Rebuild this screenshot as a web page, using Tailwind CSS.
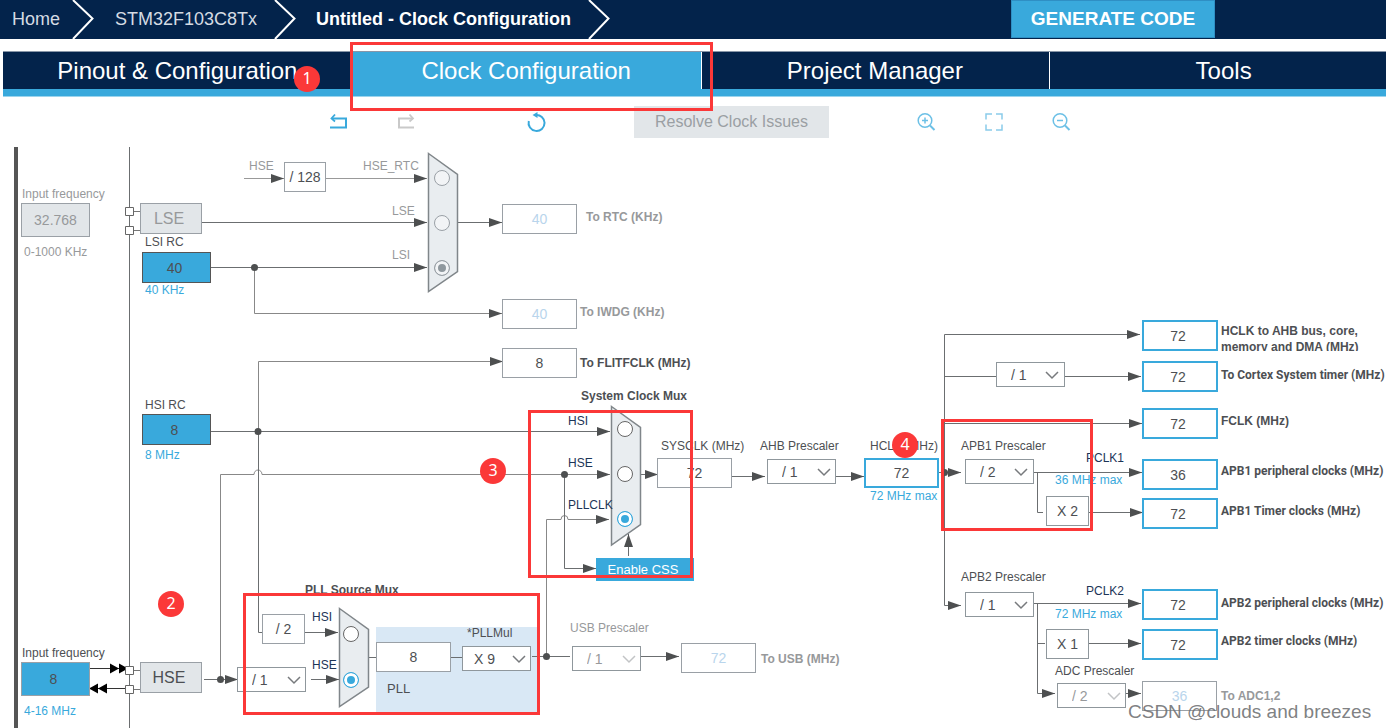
<!DOCTYPE html>
<html lang="en">
<head>
<meta charset="utf-8">
<meta name="viewport" content="width=device-width, initial-scale=1">
<title>Untitled - Clock Configuration</title>
<script src="https://cdn.jsdelivr.net/npm/@tailwindcss/browser@4"></script>
</head>
<body class="relative flex h-screen flex-col overflow-hidden bg-white font-['Liberation_Sans',Arial,sans-serif] text-[#4d4f53]">

<header class="flex h-[39px] shrink-0 items-center bg-[#03234b] text-lg text-white">
  <nav aria-label="Breadcrumb" class="flex h-full items-center [&>a]:pb-0.5">
    <a href="#" class="w-[72px] pl-3 text-[#d5dbe3]">Home</a>
    <svg class="h-full w-[22px]" viewBox="0 0 22 39" fill="none" stroke="#fff" stroke-width="2"><path d="M1 0 20.500 18.500 1 39"/></svg>
    <a href="#" class="w-[180px] pl-[21px] text-[#d5dbe3]">STM32F103C8Tx</a>
    <svg class="h-full w-[22px]" viewBox="0 0 22 39" fill="none" stroke="#fff" stroke-width="2"><path d="M1 0 20.500 18.500 1 39"/></svg>
    <a href="#" aria-current="page" class="w-[292px] pl-5 font-bold whitespace-nowrap">Untitled - Clock Configuration</a>
    <svg class="h-full w-[22px]" viewBox="0 0 22 39" fill="none" stroke="#fff" stroke-width="2"><path d="M1 0 20.500 18.500 1 39"/></svg>
  </nav>
  <button class="mr-[171px] mb-px ml-auto h-[38px] w-[204px] border border-[#2f8fc4] bg-[#39a9dc] text-[19px] font-bold">GENERATE CODE</button>
</header>

<nav aria-label="Sections" class="mt-3 -mr-3 ml-[3px] grid h-[46px] shrink-0 grid-cols-4 border-t border-b border-t-[#8896a8] border-b-[#9bd4ed] text-2xl text-white [&>a]:flex [&>a]:items-center [&>a]:justify-center [&>a]:border-b-[7px] [&>a]:border-[#39a9dc]">
  <a href="#" class="bg-[#03234b]">Pinout &amp; Configuration</a>
  <a href="#" aria-current="page" class="bg-[#39a9dc]">Clock Configuration</a>
  <a href="#" class="bg-[#03234b] shadow-[inset_1px_0_#fff]">Project Manager</a>
  <a href="#" class="bg-[#03234b] shadow-[inset_1px_0_#fff]">Tools</a>
</nav>

<div role="toolbar" aria-label="Clock tools" class="flex h-[43px] shrink-0 items-start pt-[9px] pl-[327px] [&>button]:flex [&>button]:h-8 [&>button]:items-center [&>button]:justify-center">
  <button aria-label="Undo" class="w-6"><svg class="size-6" viewBox="0 0 24 24" fill="none" stroke="#39a9dc" stroke-width="2"><path d="M5 8.500H19V17.500H3"/><path d="M8 4.500 4.500 8.500 8 11.500" stroke-width="1.800"/></svg></button>
  <button aria-label="Redo" class="ml-[43px] w-6" disabled><svg class="size-6" viewBox="0 0 24 24" fill="none" stroke="#c9c9c9" stroke-width="2"><path d="M19 8.500H5V17.500H20"/><path d="M15.500 4.500 19 8.500l-3.500 3" stroke-width="1.800"/></svg></button>
  <button aria-label="Reset" class="ml-[107px] w-6"><svg class="size-6" viewBox="0 0 24 24" fill="none" stroke="#39a9dc" stroke-width="2"><path d="M3.800 11A8 8 0 1 0 10.500 5"/><path d="M7.500 5 12.500 2v6z" fill="#39a9dc" stroke="none"/></svg></button>
  <button class="ml-[85px] w-[195px] bg-[#e2e6e9] text-base text-[#9a9fa3]" disabled>Resolve Clock Issues</button>
  <button aria-label="Zoom in" class="ml-[85px] w-6"><svg class="size-6" viewBox="0 0 24 24" fill="none" stroke="#6cc0e6" stroke-width="1.500"><circle cx="11" cy="10.500" r="6.800"/><path d="M8 10.500h6M11 7.500v6"/><path d="m16 15.500 4.500 4.500" stroke-width="2"/></svg></button>
  <button aria-label="Fit to window" class="ml-11 w-6"><svg class="size-6" viewBox="0 0 24 24" fill="none" stroke="#8accea" stroke-width="1.500"><path d="M4 9.500V4h6M14 4h6v5.500M20 14.500V20h-6M10 20H4v-5.500"/></svg></button>
  <button aria-label="Zoom out" class="ml-[43px] w-6"><svg class="size-6" viewBox="0 0 24 24" fill="none" stroke="#6cc0e6" stroke-width="1.500"><circle cx="11" cy="10.500" r="6.800"/><path d="M8 10.500h6"/><path d="m16 15.500 4.500 4.500" stroke-width="2"/></svg></button>
</div>

<!-- Clock tree: a free canvas of nodes joined by wires -->
<main class="relative grow overflow-hidden text-xs leading-4 whitespace-nowrap *:absolute [&>button]:border [&>button]:border-[#9aa0a6] [&>button]:bg-[#e2e6e9] [&>button]:text-base [&>input[type=radio]]:size-4 [&>input[type=radio]]:appearance-none [&>input[type=radio]]:rounded-full [&>input[type=radio]]:border [&>input[type=radio]]:bg-white [&>input[type=text]]:border [&>input[type=text]]:text-center [&>input[type=text]]:text-sm [&>select]:h-[25px] [&>select]:w-[69px] [&>select]:appearance-none [&>select]:border [&>select]:border-[#8f979c] [&>select]:bg-white [&>select]:pl-[14px] [&>select]:text-sm [&>select]:opacity-100">

  <div class="top-[487px] left-[376px] h-[85px] w-[164px] bg-[#d9e8f5]"></div>

  <svg class="top-0 left-0 h-[588px] w-[1386px]" viewBox="0 140 1386 588" fill="none" stroke="#6b6e70">
    <defs>
      <marker id="arrow" markerUnits="userSpaceOnUse" markerWidth="13" markerHeight="10" refX="13" refY="5" orient="auto"><path d="M0 0.500 13 5 0 9.500z" fill="#4d4f50" stroke="none"/></marker>
    </defs>
    <path d="M16 147V728" stroke="#555" stroke-width="4"/>
    <path d="M129.500 147V728"/>
    <g stroke="#777"><path d="M133 211.500h7M133 230.500h7M133 670.500h7M133 689.500h7"/></g>

    <!-- wires that end in an arrow -->
    <g marker-end="url(#arrow)">
      <path d="M244 178.500H284" stroke="#999"/>
      <path d="M326 178.500H427" stroke="#999"/>
      <path d="M202 222.500H427"/>
      <path d="M211 267.500H427"/>
      <path d="M458 222.500H502"/>
      <path d="M254.500 267V313.500H502" stroke="#888"/>
      <path d="M258.500 431V361.500H503" stroke="#888"/>
      <path d="M211 431.500H610"/>
      <path d="M220.500 679V474.500H254a4 4.500 0 0 1 8 0H610" stroke="#888"/>
      <path d="M546.500 656V519.500H561a3.500 4 0 0 1 7 0H609" stroke="#888"/>
      <path d="M564.500 474V568.500H596"/>
      <path d="M640 474.500H658"/>
      <path d="M732 476.500H765"/>
      <path d="M836 476.500H864"/>
      <path d="M939 472.500H961"/>
      <path d="M944.500 472V334.500H1140"/>
      <path d="M1065 376.500H1141"/>
      <path d="M944 423.500H1142"/>
      <path d="M1034 472.500H1142"/>
      <path d="M1089 512.500H1143"/>
      <path d="M944.500 472V605.500H961"/>
      <path d="M1034 603.500H1141"/>
      <path d="M1089 643.500H1141"/>
      <path d="M1037.500 603V693.500H1055"/>
      <path d="M1126 693.500H1141"/>
      <path d="M204 679.500H238"/>
      <path d="M311 679.500H339"/>
      <path d="M305 632.500H338"/>
      <path d="M641 656.500H679"/>
    </g>
    <path d="M258.500 431V632.500H263M944 376.500H996M1037.500 472V512.500H1043M1037 643.500h8M368 657.500h8M451 657.500h11M532 656.500h38"/>

    <g stroke="none" fill="#4d4f50">
      <circle cx="254.500" cy="267.500" r="3.500"/><circle cx="258" cy="431.500" r="3.500"/><circle cx="220.500" cy="679.500" r="3.500"/>
      <circle cx="564.500" cy="474.500" r="3.500"/><circle cx="546.500" cy="656.500" r="3.500"/><circle cx="944.500" cy="472.500" r="3.500"/>
    </g>

    <!-- external crystal pins -->
    <g stroke="#333"><path d="M90 668.500H125M97 688.500H125"/></g>
    <path d="M110 663.500l9 5-9 5zM119 663.500l9 5-9 5zM98 683.500l-9 5 9 5zM107 683.500l-9 5 9 5z" fill="#000" stroke="none"/>
    <g fill="#fff" stroke="#666"><path d="M125.500 207.500h8v8h-8zM125.500 226.500h8v8h-8zM125.500 666.500h8v8h-8zM125.500 685.500h8v8h-8z"/></g>

    <g fill="#e9edf0" stroke="#80868a">
      <path d="M428.500 153.500 457.500 174.500V271.500L428.500 291.500z" stroke-width="1.500"/>
      <path d="M611.500 406.500 640.500 427.500V524.500L611.500 545z" stroke-width="1.500"/>
      <path d="M339.500 608.500 368.500 629.500V687L339.500 706.500z" stroke-width="1.500"/>
    </g>
    <path d="M628.500 556V534" marker-end="url(#arrow)"/>
  </svg>

  <!-- LSE / LSI / HSI / HSE sources -->
  <label for="lse-in" class="top-[46px] left-[22px] text-[#97999b]">Input frequency</label>
  <input id="lse-in" type="text" value="32.768" disabled class="top-[63px] left-[21px] h-[34px] w-[69px] border-[#9aa0a6] bg-[#e2e6e9] text-[#97999b]">
  <span class="top-[104px] left-6 text-[#97999b]">0-1000 KHz</span>
  <button class="top-[63px] left-[140px] h-[31px] w-[62px] pr-1 text-[#97999b]" disabled>LSE</button>
  <label for="lsi" class="top-[94px] left-[145px]">LSI RC</label>
  <input id="lsi" type="text" value="40" readonly class="top-[112px] left-[142px] h-[31px] w-[69px] border-[#555] bg-[#39a9dc] pr-1">
  <span class="top-[142px] left-[145px] text-[#39a9dc]">40 KHz</span>
  <label for="hsi" class="top-[257px] left-[145px]">HSI RC</label>
  <input id="hsi" type="text" value="8" readonly class="top-[274px] left-[142px] h-[31px] w-[69px] border-[#555] bg-[#39a9dc] pr-1">
  <span class="top-[307px] left-[145px] text-[#39a9dc]">8 MHz</span>
  <label for="hse-in" class="top-[505px] left-[22px]">Input frequency</label>
  <input id="hse-in" type="text" value="8" class="top-[522px] left-[21px] h-[34px] w-[69px] border-[#9aa0a6] bg-[#39a9dc] pr-1">
  <span class="top-[563px] left-6 text-[#39a9dc]">4-16 MHz</span>
  <button class="top-[522px] left-[140px] h-[31px] w-[62px] pr-1">HSE</button>

  <!-- RTC mux -->
  <span class="top-[18px] left-[249px] text-[#97999b]">HSE</span>
  <input type="text" aria-label="RTC divider" value="/ 128" readonly class="top-[22px] left-[284px] h-[30px] w-[42px] border-[#9aa0a6] bg-white">
  <label for="rtc-hse" class="top-[18px] left-[363px] text-[#97999b]">HSE_RTC</label>
  <label for="rtc-lse" class="top-[63px] left-[392px] text-[#97999b]">LSE</label>
  <label for="rtc-lsi" class="top-[107px] left-[392px] text-[#97999b]">LSI</label>
  <input type="radio" name="rtc" id="rtc-hse" disabled class="top-[30px] left-[434px] border-[#9aa0a6] bg-[#f2f4f6]!">
  <input type="radio" name="rtc" id="rtc-lse" disabled class="top-[75px] left-[434px] border-[#9aa0a6] bg-[#f2f4f6]!">
  <input type="radio" name="rtc" id="rtc-lsi" disabled checked class="top-[120px] left-[434px] border-[#9aa0a6] checked:bg-[#8f989e]! checked:shadow-[inset_0_0_0_3px_#f2f4f6]">
  <input id="o-rtc" type="text" value="40" disabled class="top-[64px] left-[502px] h-[30px] w-[75px] border-[#9aa0a6] text-[#b9d5ec]">
  <label for="o-rtc" class="top-[69px] left-[586px] font-bold text-[#97999b]">To RTC (KHz)</label>
  <input id="o-iwdg" type="text" value="40" disabled class="top-[159px] left-[502px] h-[30px] w-[75px] border-[#9aa0a6] text-[#b9d5ec]">
  <label for="o-iwdg" class="top-[164px] left-[580px] font-bold text-[#97999b]">To IWDG (KHz)</label>
  <input id="o-flit" type="text" value="8" readonly class="top-[208px] left-[502px] h-[30px] w-[75px] border-[#9aa0a6]">
  <label for="o-flit" class="top-[215px] left-[580px] font-bold">To FLITFCLK (MHz)</label>

  <!-- system clock mux -->
  <span class="top-[248px] left-[581px] font-bold">System Clock Mux</span>
  <label for="sys-hsi" class="top-[273px] left-[568px] text-[#1c3557]">HSI</label>
  <label for="sys-hse" class="top-[315px] left-[568px] text-[#1c3557]">HSE</label>
  <label for="sys-pll" class="top-[357px] left-[568px] text-[#1c3557]">PLLCLK</label>
  <input type="radio" name="sys" id="sys-hsi" class="top-[281px] left-[617px] border-[#666]">
  <input type="radio" name="sys" id="sys-hse" class="top-[326px] left-[617px] border-[#666]">
  <input type="radio" name="sys" id="sys-pll" checked class="top-[371px] left-[617px] border-[#39a9dc] checked:bg-[#39a9dc]! checked:shadow-[inset_0_0_0_3px_#fff]">
  <button class="top-[418px] left-[596px] h-[23px] w-[98px] border-0! bg-[#39a9dc]! pr-1 text-[13px]! text-white">Enable CSS</button>
  <label for="sysclk" class="top-[298px] left-[661px]">SYSCLK (MHz)</label>
  <input id="sysclk" type="text" value="72" readonly class="top-[318px] left-[657px] h-[30px] w-[75px] border-[#9aa0a6]">
  <label for="ahb" class="top-[298px] left-[760px]">AHB Prescaler</label>
  <select id="ahb" class="top-[319px] left-[767px]"><option>/ 1</option></select>
  <label for="hclk" class="top-[298px] left-[870px]">HCLK (MHz)</label>
  <input id="hclk" type="text" value="72" class="top-[318px] left-[864px] h-[30px] w-[75px] border-2! border-[#39a9dc] bg-white">
  <span class="top-[348px] left-[870px] text-[#39a9dc]">72 MHz max</span>

  <!-- APB prescalers -->
  <select aria-label="Cortex prescaler" class="top-[222px] left-[996px]"><option>/ 1</option></select>
  <label for="apb1" class="top-[298px] left-[961px]">APB1 Prescaler</label>
  <select id="apb1" class="top-[319px] left-[965px]"><option>/ 2</option></select>
  <span class="top-[310px] left-[1086px] text-[#1c3557]">PCLK1</span>
  <span class="top-[332px] left-[1055px] text-[#39a9dc]">36 MHz max</span>
  <input type="text" aria-label="APB1 timer multiplier" value="X 2" readonly class="top-[356px] left-[1046px] h-[30px] w-[43px] border-[#8f979c] bg-white">
  <label for="apb2" class="top-[429px] left-[961px]">APB2 Prescaler</label>
  <select id="apb2" class="top-[452px] left-[965px]"><option>/ 1</option></select>
  <span class="top-[443px] left-[1086px] text-[#1c3557]">PCLK2</span>
  <span class="top-[466px] left-[1055px] text-[#39a9dc]">72 MHz max</span>
  <input type="text" aria-label="APB2 timer multiplier" value="X 1" readonly class="top-[489px] left-[1046px] h-[30px] w-[43px] border-[#8f979c] bg-white">
  <label for="adc" class="top-[523px] left-[1055px]">ADC Prescaler</label>
  <select id="adc" disabled class="top-[543px] left-[1057px] text-[#97999b]"><option>/ 2</option></select>

  <!-- bus outputs -->
  <input id="o-ahb" type="text" value="72" readonly class="top-[180px] left-[1142px] h-[31px] w-[76px] border-2! border-[#39a9dc] pr-1">
  <label for="o-ahb" class="top-[183px] left-[1221px] h-7 w-[150px] overflow-hidden font-bold whitespace-normal">HCLK to AHB bus, core, memory and DMA (MHz)</label>
  <input id="o-ctx" type="text" value="72" readonly class="top-[221px] left-[1142px] h-[31px] w-[76px] border-2! border-[#39a9dc] pr-1">
  <label for="o-ctx" class="top-[227px] left-[1221px] font-['Roboto',sans-serif] font-bold">To Cortex System timer (MHz)</label>
  <input id="o-fclk" type="text" value="72" readonly class="top-[268px] left-[1142px] h-[31px] w-[76px] border-2! border-[#39a9dc] pr-1">
  <label for="o-fclk" class="top-[273px] left-[1221px] font-bold">FCLK (MHz)</label>
  <input id="o-p1" type="text" value="36" readonly class="top-[319px] left-[1142px] h-[31px] w-[76px] border-2! border-[#39a9dc] pr-1">
  <label for="o-p1" class="top-[323px] left-[1221px] font-['Roboto',sans-serif] font-bold">APB1 peripheral clocks (MHz)</label>
  <input id="o-t1" type="text" value="72" readonly class="top-[358px] left-[1142px] h-[31px] w-[76px] border-2! border-[#39a9dc] pr-1">
  <label for="o-t1" class="top-[363px] left-[1221px] font-['Roboto',sans-serif] font-bold">APB1 Timer clocks (MHz)</label>
  <input id="o-p2" type="text" value="72" readonly class="top-[449px] left-[1142px] h-[31px] w-[76px] border-2! border-[#39a9dc] pr-1">
  <label for="o-p2" class="top-[455px] left-[1221px] font-['Roboto',sans-serif] font-bold">APB2 peripheral clocks (MHz)</label>
  <input id="o-t2" type="text" value="72" readonly class="top-[489px] left-[1142px] h-[31px] w-[76px] border-2! border-[#39a9dc] pr-1">
  <label for="o-t2" class="top-[493px] left-[1221px] font-['Roboto',sans-serif] font-bold">APB2 timer clocks (MHz)</label>
  <input id="o-adc" type="text" value="36" disabled class="top-[541px] left-[1142px] h-[30px] w-[75px] border-[#9aa0a6] text-[#b9d5ec]">
  <label for="o-adc" class="top-[548px] left-[1221px] font-bold text-[#97999b]">To ADC1,2</label>

  <!-- PLL -->
  <span class="top-[442px] left-[305px] h-3 overflow-hidden font-bold">PLL Source Mux</span>
  <input type="text" aria-label="HSI divider" value="/ 2" readonly class="top-[474px] left-[262px] h-[30px] w-[43px] border-[#9aa0a6] bg-white">
  <select aria-label="HSE divider" class="top-[527px] left-[237px]"><option>/ 1</option></select>
  <label for="pll-hsi" class="top-[469px] left-[312px] text-[#1c3557]">HSI</label>
  <label for="pll-hse" class="top-[517px] left-[312px] text-[#1c3557]">HSE</label>
  <input type="radio" name="pll" id="pll-hsi" class="top-[486px] left-[343px] border-[#666]">
  <input type="radio" name="pll" id="pll-hse" checked class="top-[532px] left-[343px] border-[#39a9dc] checked:bg-[#39a9dc]! checked:shadow-[inset_0_0_0_3px_#fff]">
  <input id="pll" type="text" value="8" readonly class="top-[502px] left-[376px] h-[30px] w-[75px] border-[#9aa0a6] bg-white">
  <label for="pll" class="top-[541px] left-[387px] text-[13px]">PLL</label>
  <label for="pllmul" class="top-[485px] left-[467px]">*PLLMul</label>
  <select id="pllmul" class="top-[506px] left-[462px] pl-[11px]!"><option>X 9</option></select>
  <label for="usbp" class="top-[480px] left-[570px] text-[#97999b]">USB Prescaler</label>
  <select id="usbp" disabled class="top-[506px] left-[572px] text-[#97999b]"><option>/ 1</option></select>
  <input id="o-usb" type="text" value="72" disabled class="top-[503px] left-[681px] h-[30px] w-[75px] border-[#9aa0a6] text-[#b9d5ec]">
  <label for="o-usb" class="top-[511px] left-[761px] font-bold text-[#97999b]">To USB (MHz)</label>

  <!-- drop-down chevrons -->
  <svg class="pointer-events-none top-0 left-0 h-[588px] w-[1386px]" viewBox="0 140 1386 588" fill="none" stroke="#777a7d" stroke-width="1.500">
    <path d="M818 469l6 6 6-6M1046 372l6 6 6-6M1015 469l6 6 6-6M1015 602l6 6 6-6M288 677l6 6 6-6M513 656l6 6 6-6"/>
    <path d="M623 656l6 6 6-6M1108 693l6 6 6-6" stroke="#c2c4c6"/>
  </svg>

  <p class="top-[558px] left-[1128px] text-[19px] leading-7 text-[#6f7173]/90">CSDN @clouds and breezes</p>
</main>

<!-- step annotations laid over the page -->
<div class="pointer-events-none absolute inset-0 overflow-hidden *:absolute [&>b]:flex [&>b]:size-[26px] [&>b]:items-center [&>b]:justify-center [&>b]:rounded-full [&>b]:bg-[#fb3838] [&>b]:pb-0.5 [&>b]:font-['Noto_Sans',sans-serif] [&>b]:text-base [&>b]:leading-none [&>b]:font-normal [&>b]:text-white [&>i]:border-3 [&>i]:border-[#fb3838]">
  <i class="top-[42px] left-[350px] h-[69px] w-[363px]"></i>
  <i class="top-[593px] left-[243px] h-[122px] w-[297px]"></i>
  <i class="top-[410px] left-[528px] h-[168px] w-[165px]"></i>
  <i class="top-[419px] left-[941px] h-[112px] w-[152px]"></i>
  <b class="top-[66px] left-[294px]">1</b>
  <b class="top-[591px] left-[158px]">2</b>
  <b class="top-[458px] left-[480px]">3</b>
  <b class="top-[432px] left-[892px]">4</b>
</div>
</body>
</html>
